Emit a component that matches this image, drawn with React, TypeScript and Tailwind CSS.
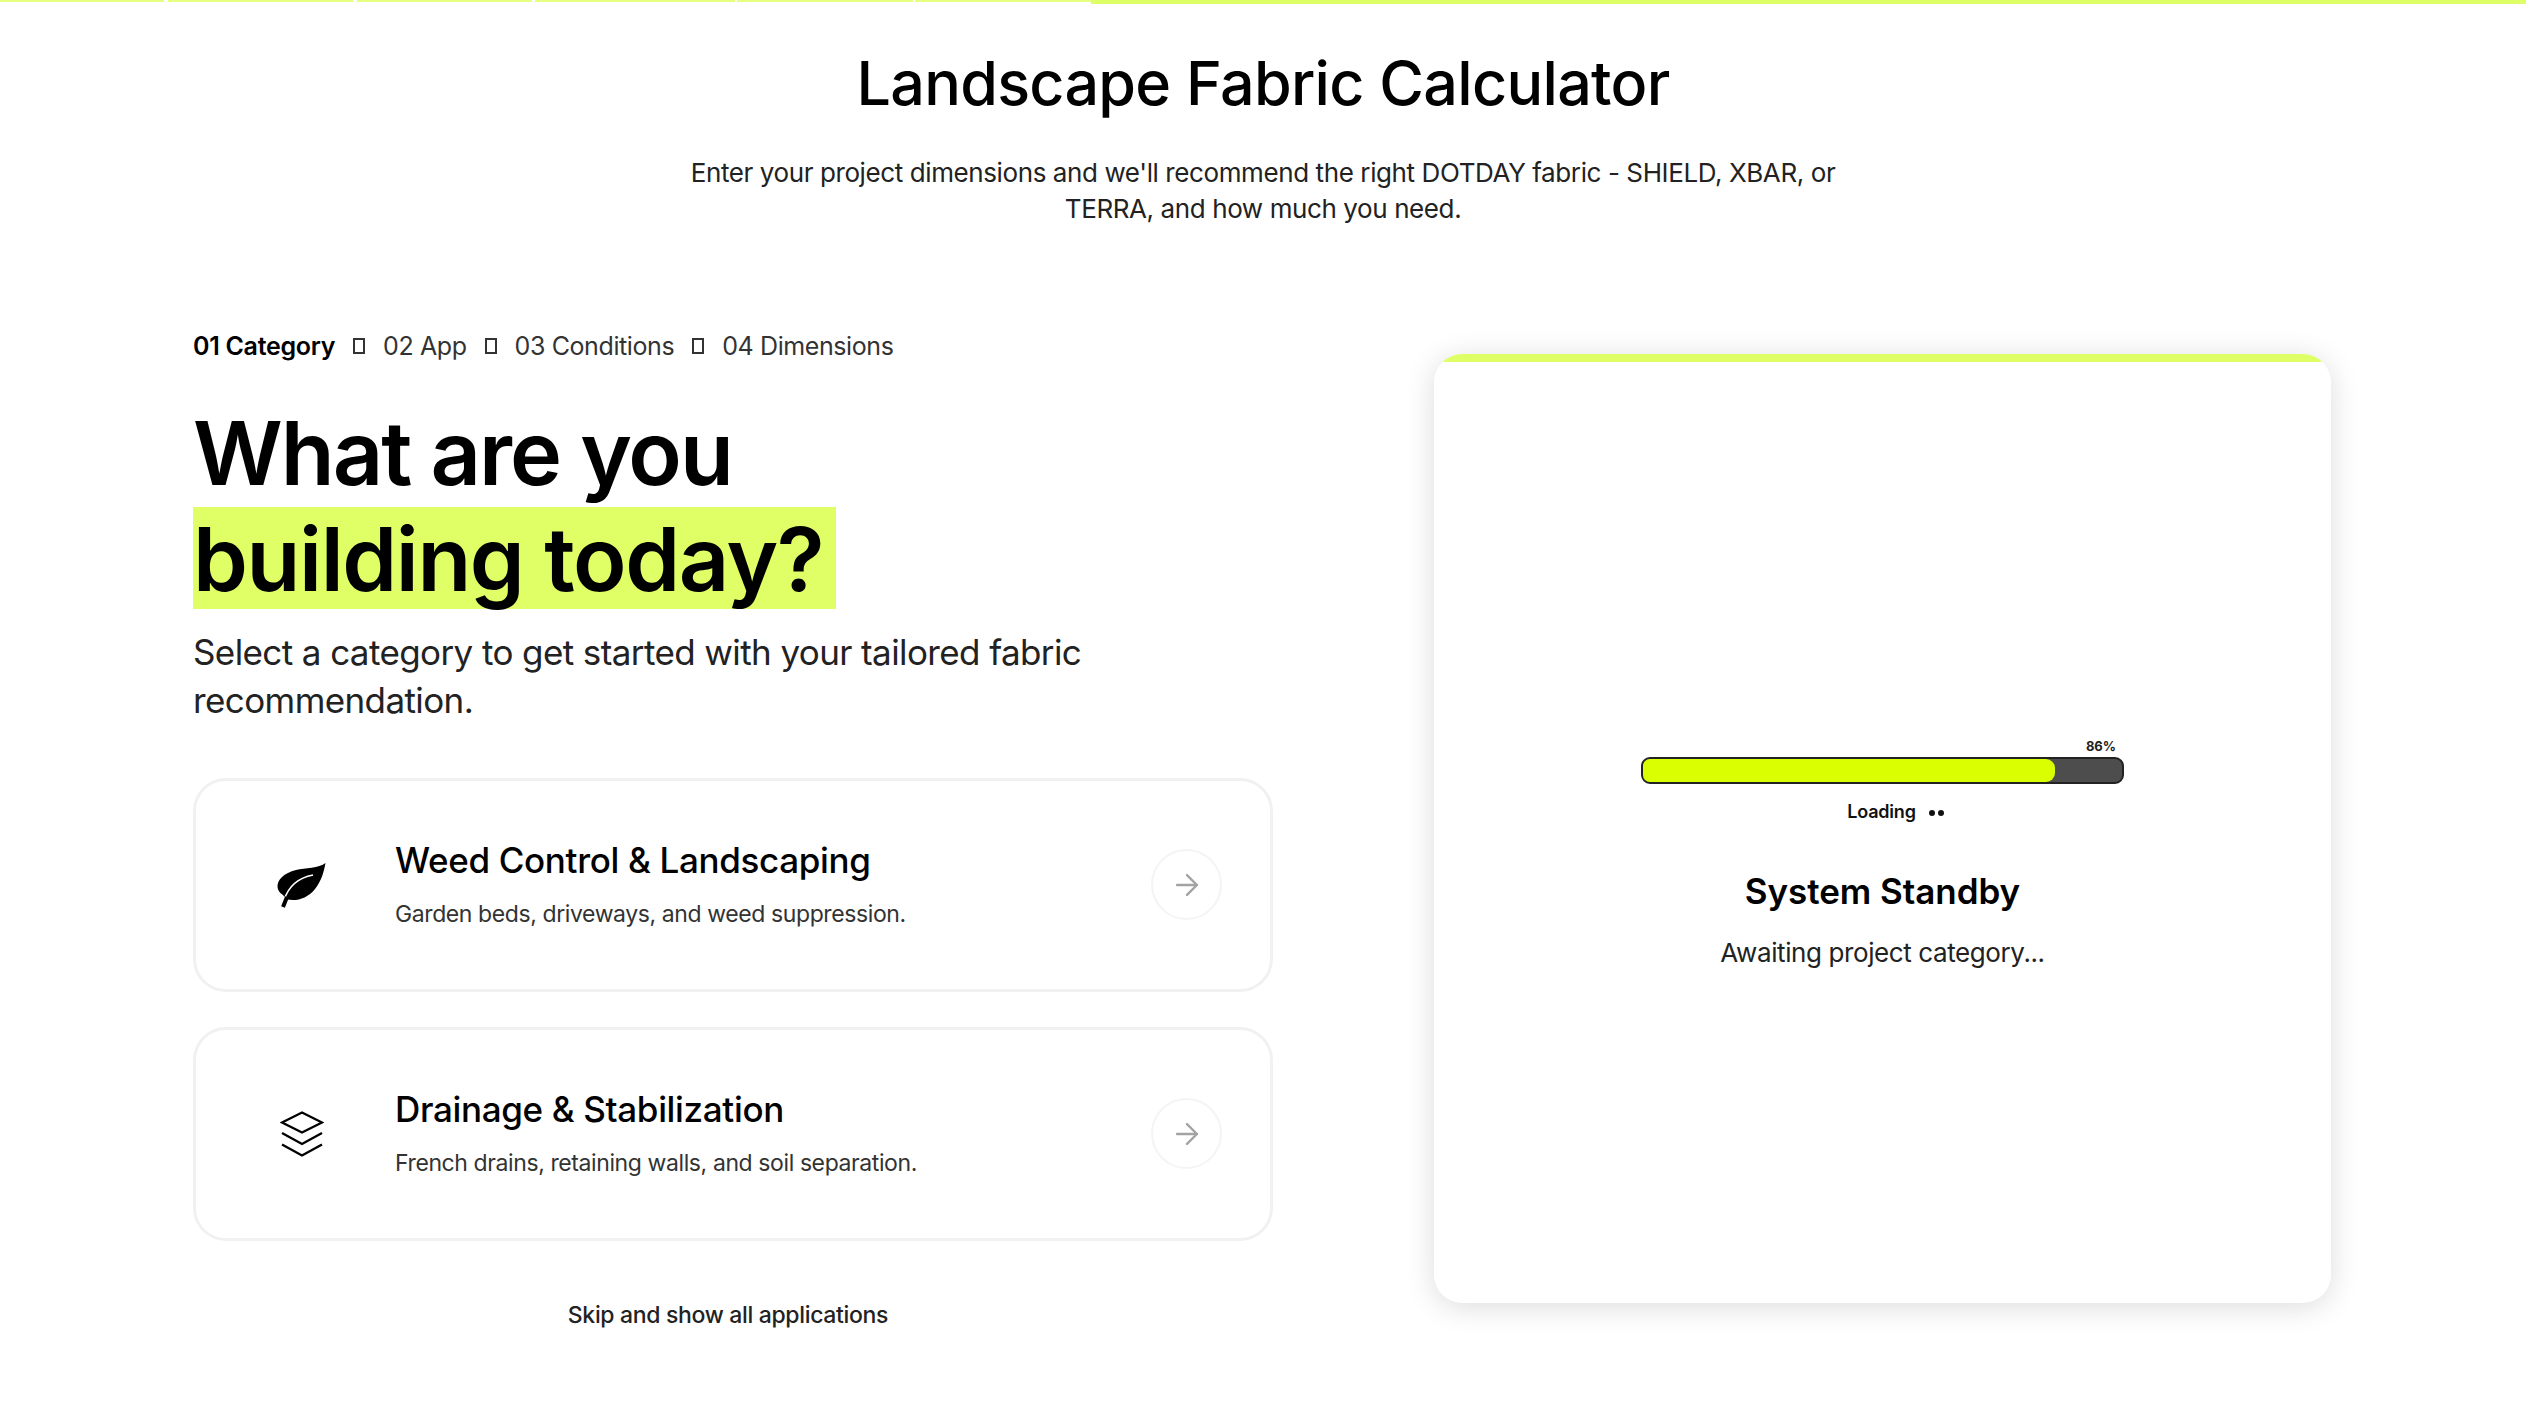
import { ArrowRight } from 'lucide-react'

const font = { fontFamily: 'Inter, "Noto Sans", sans-serif' }

const barSegments = [
  'w-[164px] mr-[4px]',
  'w-[185px] mr-[4px]',
  'w-[175px] mr-[3px]',
  'w-[200px] mr-[2px]',
  'w-[176px] mr-[2px]',
  'w-[176px]',
]

const steps = [
  { label: '01 Category', active: true },
  { label: '02 App' },
  { label: '03 Conditions' },
  { label: '04 Dimensions' },
]

function LeafIcon() {
  return (
    <svg width="50" height="46" viewBox="0 0 50 46" fill="none">
      <path
        d="M48.5 0C42 5 28 5 19 7C7 10 0 17 0.5 24C1 28 3 30 6 32L9 36C18 39 30 36 38 26C45 17 47 8 48.5 0Z"
        fill="#000"
      />
      <path d="M7 37C11 25 20 15 36 12" stroke="#fff" strokeWidth="1.5" />
      <path d="M6 44L10 34" stroke="#000" strokeWidth="4" />
    </svg>
  )
}

function StackIcon() {
  return (
    <svg width="44" height="46" viewBox="0 0 44 46" fill="none" stroke="#000" strokeWidth="2.4">
      <path d="M22 1.5L42 11.5L22 21.5L2 11.5Z" />
      <path d="M2 22L22 33L42 22" />
      <path d="M2 33.5L22 44.5L42 33.5" />
    </svg>
  )
}

function CategoryCard({ icon, title, text }: { icon: React.ReactNode; title: string; text: string }) {
  return (
    <div className="h-[213.5px] flex items-center border-[3px] border-[#f1f1f1] rounded-[33px] pl-[81px] pr-[48px] bg-white">
      <div className="w-[50px] flex justify-center">{icon}</div>
      <div className="ml-[68px]">
        <h3 className="text-[35px] leading-[40px] font-medium text-black tracking-[-0.34px]">{title}</h3>
        <p className="mt-[18px] text-[23px] leading-[32px] text-[#333] tracking-[-0.4px]">{text}</p>
      </div>
      <div className="ml-auto w-[71px] h-[71px] rounded-full border-2 border-[#f4f4f4] flex items-center justify-center">
        <ArrowRight size={34} strokeWidth={1.7} color="#a3a3a3" />
      </div>
    </div>
  )
}

export default function App() {
  return (
    <div className="w-[2526px] min-h-[1421px] bg-white text-black overflow-hidden" style={font}>
      <div className="flex h-[4px] items-start">
        {barSegments.map((cls) => (
          <div key={cls} className={`${cls} h-[2px] bg-[#e6ff80]`} />
        ))}
        <div className="flex-1 h-[4px] bg-[#dfff66]" />
      </div>

      <header className="pt-[43px] text-center">
        <h1 className="text-[61px] leading-[72px] font-medium tracking-[-0.7px]">Landscape Fabric Calculator</h1>
        <p className="mt-[36px] mx-auto w-[1200px] text-[26px] leading-[36px] text-[#222] tracking-[-0.4px]">
          Enter your project dimensions and we'll recommend the right DOTDAY fabric - SHIELD, XBAR, or
          <br />
          TERRA, and how much you need.
        </p>
      </header>

      <main className="mt-[101px] pl-[193px] flex items-start">
        <section className="w-[1080px]">
          <nav className="h-[36px] flex items-center text-[25px] leading-[36px] text-[#333] tracking-[-0.4px]">
            {steps.map((step, i) => (
              <div key={step.label} className="flex items-center">
                {i > 0 && <span className="w-[12px] h-[16px] mx-[18px] border-2 border-[#333]" />}
                <span className={step.active ? 'font-semibold text-black tracking-[-0.3px]' : ''}>{step.label}</span>
              </div>
            ))}
          </nav>

          <h2 className="mt-[36px] text-[88px] font-semibold">
            <span className="block leading-[106px] tracking-[-2px]">What are you</span>
            <span className="block w-[643px] h-[102px] leading-[104px] bg-[#e0ff66] mt-[1px] tracking-[-1.4px]">
              building today?
            </span>
          </h2>

          <p className="mt-[19px] text-[35px] leading-[48px] text-[#222] tracking-[-0.6px]">
            Select a category to get started with your tailored fabric recommendation.
          </p>

          <div className="mt-[54px] flex flex-col gap-[35.5px]">
            <CategoryCard
              icon={<div className="mt-[3px]"><LeafIcon /></div>}
              title="Weed Control & Landscaping"
              text="Garden beds, driveways, and weed suppression."
            />
            <CategoryCard
              icon={<StackIcon />}
              title="Drainage & Stabilization"
              text="French drains, retaining walls, and soil separation."
            />
          </div>

          <div className="mt-[58px] text-center pr-[10px] text-[23px] leading-[32px] font-medium text-[#222] tracking-[-0.33px]">
            Skip and show all applications
          </div>
        </section>

        <aside className="ml-[161px] mt-[26px] w-[897px] h-[949px] rounded-[28px] bg-white overflow-hidden shadow-[0_4px_30px_rgba(0,0,0,0.14)] flex flex-col items-center">
          <div className="w-full h-[8px] bg-[#dfff66]" />
          <div className="w-[483px] mt-[376px]">
            <div className="text-right pr-[8px] text-[13px] leading-[16px] font-bold text-[#222]">86%</div>
            <div className="mt-[3px] h-[27px] rounded-[9px] border-2 border-[#222] bg-[#4d4d4d] overflow-hidden">
              <div className="w-[86%] h-full bg-[#d9ff00] rounded-r-[9px]" />
            </div>
            <div className="mt-[15px] flex items-center justify-center pl-[26px] h-[24px]">
              <span className="text-[18px] font-semibold text-[#111] tracking-[-0.2px]">Loading</span>
              <span className="ml-[13px] mt-[4px] w-[6px] h-[6px] rounded-full bg-[#111]" />
              <span className="ml-[3px] mt-[4px] w-[6px] h-[6px] rounded-full bg-[#111]" />
            </div>
          </div>
          <h3 className="mt-[46px] text-[35px] leading-[44px] font-semibold tracking-[-0.05px]">System Standby</h3>
          <p className="mt-[22px] text-[26px] leading-[36px] text-[#222] tracking-[-0.4px]">Awaiting project category...</p>
        </aside>
      </main>
    </div>
  )
}
